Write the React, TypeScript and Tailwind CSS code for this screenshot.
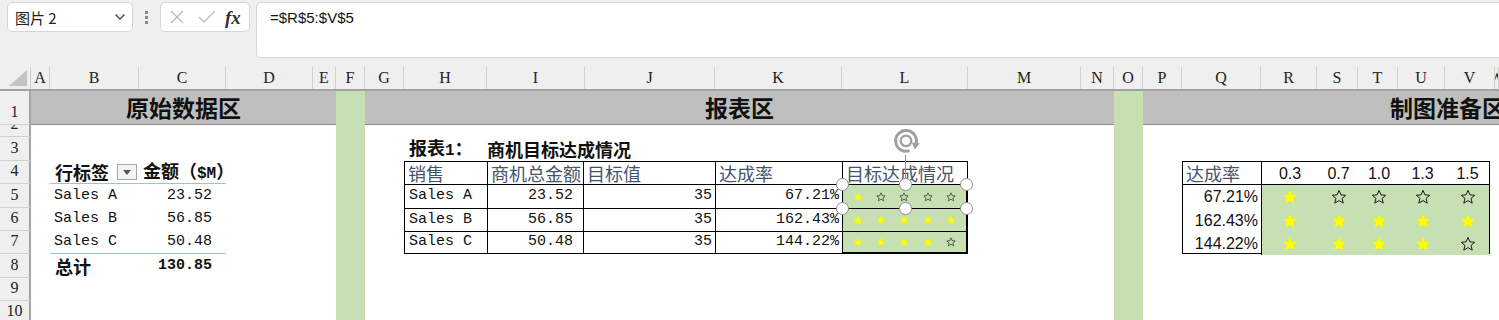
import React from "react";

// column widths of the sheet: row header, A..V, W (rest)
const COLS =
  "grid-cols-[31px_19px_89px_87px_87px_23px_29px_39px_83px_98px_130px_127px_126px_113px_33px_29px_39px_79px_56px_41px_40px_47px_50px_1fr]";

const cjk = "font-['Noto_Sans_CJK_SC',sans-serif]";
const mono = "font-['Liberation_Mono','Noto_Sans_CJK_SC',monospace]";
const arial = "font-['Liberation_Sans','Noto_Sans_CJK_SC',sans-serif]";
const serif = "font-['Liberation_Serif','Noto_Sans_CJK_SC',serif]";

const letters = "ABCDEFGHIJKLMNOPQRSTUVW".split("");

const rowLabels = [
  { label: "1", cls: "row-start-1" },
  { label: "2", cls: "row-start-2" },
  { label: "3", cls: "row-start-3" },
  { label: "4", cls: "row-start-4" },
  { label: "5", cls: "row-start-5" },
  { label: "6", cls: "row-start-6" },
  { label: "7", cls: "row-start-7" },
  { label: "8", cls: "row-start-8" },
  { label: "9", cls: "row-start-9" },
  { label: "10", cls: "row-start-10" },
];

const pivot = [
  { name: "Sales A", amount: "23.52" },
  { name: "Sales B", amount: "56.85" },
  { name: "Sales C", amount: "50.48" },
];

const report = [
  { name: "Sales A", amount: "23.52", target: "35", rate: "67.21%", stars: [1, 0, 0, 0, 0] },
  { name: "Sales B", amount: "56.85", target: "35", rate: "162.43%", stars: [1, 1, 1, 1, 1] },
  { name: "Sales C", amount: "50.48", target: "35", rate: "144.22%", stars: [1, 1, 1, 1, 0] },
];

const STAR = "12,2 14.9,8.8 22,9.4 16.6,14.1 18.3,21.2 12,17.4 5.7,21.2 7.4,14.1 2,9.4 9.1,8.8";

const Star = ({ filled, size }: { filled: boolean; size: number }) => (
  <svg width={size} height={size} viewBox="0 0 24 24">
    <polygon
      points={STAR}
      fill={filled ? "#ffff00" : "none"}
      stroke={filled ? "#f2f200" : "#1a1a1a"}
      strokeWidth={filled ? 0.8 : 1.5}
    />
  </svg>
);

const Handle = ({ cls }: { cls: string }) => (
  <div className={`absolute w-[13px] h-[13px] rounded-full bg-white border-[1.5px] border-[#8f8f8f] ${cls}`} />
);

const Toolbar = () => (
  <div className="h-[67px] flex items-start gap-0 pt-[2px] pl-[7px]">
    <div className="w-[126px] h-[30px] rounded-[5px] border border-[#d6d6d6] bg-white flex items-center pl-[7px] pr-[6px]">
      <span className={`${cjk} text-[15px] text-[#222] leading-none`}>图片 2</span>
      <svg className="ml-auto" width="12" height="8" viewBox="0 0 12 8">
        <polyline points="1.5,1.5 6,6 10.5,1.5" fill="none" stroke="#444" strokeWidth="1.3" />
      </svg>
    </div>
    <div className="w-[27px] h-[30px] flex flex-col items-center justify-center gap-[2px]">
      <div className="w-[3px] h-[3px] bg-[#8a8a8a]" />
      <div className="w-[3px] h-[3px] bg-[#8a8a8a]" />
      <div className="w-[3px] h-[3px] bg-[#8a8a8a]" />
    </div>
    <div className="w-[90px] h-[30px] rounded-[5px] border border-[#d6d6d6] bg-white flex items-center pl-[8px]">
      <svg width="16" height="16" viewBox="0 0 16 16">
        <path d="M2 2 L14 14 M14 2 L2 14" stroke="#b8b8b8" strokeWidth="1.2" fill="none" />
      </svg>
      <svg className="ml-[13px]" width="18" height="16" viewBox="0 0 18 16">
        <polyline points="1,8 6,13 17,2" stroke="#b8b8b8" strokeWidth="1.2" fill="none" />
      </svg>
      <span className={`ml-[9px] ${serif} italic font-bold text-[19px] leading-none text-[#333]`}>fx</span>
    </div>
    <div className="ml-[6px] flex-1 h-[56px] rounded-l-[5px] border border-r-0 border-[#d6d6d6] bg-white pl-[13px] pt-[7px]">
      <div className={`${arial} text-[15px] leading-none text-[#111]`}>=$R$5:$V$5</div>
    </div>
  </div>
);

const ColumnHeader = () => (
  <div className={`grid ${COLS} h-[24px] border-b-2 border-[#a3a3a3]`}>
    <div className="relative border-r border-[#d0d0d0]">
      <svg className="absolute right-[3px] bottom-[3px]" width="18" height="16" viewBox="0 0 18 16">
        <polygon points="18,0 18,16 0,16" fill="#c4c4c4" />
      </svg>
    </div>
    {letters.map((l) => (
      <div
        key={l}
        className={`${serif} text-[16px] text-[#222] flex items-center justify-center border-r border-[#d0d0d0] overflow-hidden whitespace-nowrap`}
      >
        {l}
      </div>
    ))}
  </div>
);

const PivotTable = () => (
  <div className={`col-start-3 col-span-2 row-start-4 row-span-5 grid grid-cols-[89px_87px] grid-rows-[23px_24px_23px_23px_24px] ${mono} text-[15px] text-[#111]`}>
    <div className="flex items-center pl-[5px] pr-[2px] border-b border-[#9bc2e6]">
      <span className={`${cjk} font-bold text-[18px] leading-none`}>行标签</span>
      <div className="ml-auto w-[20px] h-[16px] border border-[#a6a6a6] bg-[#f4f4f4] flex items-center justify-center">
        <svg width="8" height="5" viewBox="0 0 8 5">
          <polygon points="0,0 8,0 4,5" fill="#555" />
        </svg>
      </div>
    </div>
    <div className="flex items-center pl-[4px] border-b border-[#9bc2e6] whitespace-nowrap">
      <span className={`${cjk} font-bold text-[18px] leading-[23px]`}>
        金额（<span className={`${mono} text-[16px]`}>$M</span>）
      </span>
    </div>
    {pivot.map((r, i) => (
      <React.Fragment key={r.name}>
        <div className={`flex items-center pl-[4px] whitespace-pre ${i === 2 ? "border-b border-[#9bc2e6]" : ""}`}>{r.name}</div>
        <div className={`flex items-center justify-end pr-[14px] ${i === 2 ? "border-b border-[#9bc2e6]" : ""}`}>{r.amount}</div>
      </React.Fragment>
    ))}
    <div className="flex items-center pl-[5px]">
      <span className={`${cjk} font-bold text-[18px] leading-none`}>总计</span>
    </div>
    <div className="flex items-center justify-end pr-[14px] font-bold">130.85</div>
  </div>
);

const ReportTable = () => (
  <>
    <div className="col-start-9 row-start-3 flex items-center pl-[5px] whitespace-nowrap">
      <span className={`${cjk} font-bold text-[18px] leading-[24px]`}>
        报表<span className={`${mono} text-[16px]`}>1</span>：
      </span>
    </div>
    <div className="col-start-10 col-span-3 row-start-3 flex items-center whitespace-nowrap">
      <span className={`${cjk} font-bold text-[18px] leading-none`}>商机目标达成情况</span>
    </div>
    <div className={`col-start-9 col-span-5 row-start-4 row-span-4 grid grid-cols-[83px_96px_132px_127px_126px] grid-rows-[23px_24px_23px_23px] ${mono} text-[15px] text-[#111]`}>
      {["销售", "商机总金额", "目标值", "达成率", "目标达成情况"].map((h, i) => (
        <div
          key={h}
          className={`flex items-center pl-[3px] border-l border-t border-black whitespace-nowrap ${cjk} text-[18px] leading-none text-[#44546a] ${i === 4 ? "border-r" : ""}`}
        >
          {h}
        </div>
      ))}
      {report.map((r, ri) => (
        <React.Fragment key={r.name}>
          <div className={`flex items-center pl-[4px] whitespace-pre border-l border-t border-black ${ri === 2 ? "border-b" : ""}`}>{r.name}</div>
          <div className={`flex items-center justify-end pr-[10px] border-l border-t border-black ${ri === 2 ? "border-b" : ""}`}>{r.amount}</div>
          <div className={`flex items-center justify-end pr-[3px] border-l border-t border-black ${ri === 2 ? "border-b" : ""}`}>{r.target}</div>
          <div className={`flex items-center justify-end pr-[3px] border-l border-t border-black ${ri === 2 ? "border-b" : ""}`}>{r.rate}</div>
          <div
            className={`relative bg-[#c6e0b4] grid grid-cols-5 items-center justify-items-center px-[3px] border-l border-t border-r-2 border-black ${ri === 2 ? "border-b-2" : ""} ${ri === 0 ? "z-10" : ""}`}
          >
            {r.stars.map((s, si) => (
              <Star key={si} filled={s === 1} size={10} />
            ))}
            {ri === 0 && (
              <>
                <div className="absolute left-[62px] -top-[30px] h-[30px] w-px bg-[#8f8f8f]" />
                <svg className="absolute left-[48px] -top-[58px]" width="30" height="30" viewBox="0 0 26 26">
                  <path d="M 16.1 20.5 A 9 9 0 1 1 21.5 15.1" fill="none" stroke="#a0a0a0" strokeWidth="2.6" />
                  <polygon points="18,13.4 25,14 20.6,19.6" fill="#a0a0a0" />
                  <circle cx="13" cy="12" r="4.6" fill="none" stroke="#a0a0a0" strokeWidth="2" />
                </svg>
                <Handle cls="-left-[7px] -top-[7px]" />
                <Handle cls="left-[56px] -top-[7px]" />
                <Handle cls="-right-[7px] -top-[7px]" />
                <Handle cls="-left-[7px] -bottom-[7px]" />
                <Handle cls="left-[56px] -bottom-[7px]" />
                <Handle cls="-right-[7px] -bottom-[7px]" />
              </>
            )}
          </div>
        </React.Fragment>
      ))}
    </div>
  </>
);

const ChartPrep = () => (
  <div className={`col-start-18 col-span-6 row-start-4 row-span-4 mr-[5px] grid grid-cols-[79px_1fr] grid-rows-[23px_24px_23px_23px] border border-black ${arial} text-[16px] text-[#111]`}>
    <div className={`flex items-center pl-[3px] border-r border-b border-black ${cjk} text-[18px] leading-none text-[#44546a]`}>达成率</div>
    <div className="grid grid-cols-[56px_41px_40px_47px_1fr] items-center justify-items-center border-b border-black">
      {["0.3", "0.7", "1.0", "1.3", "1.5"].map((v) => (
        <span key={v}>{v}</span>
      ))}
    </div>
    {report.map((r) => (
      <React.Fragment key={r.rate}>
        <div className="flex items-center justify-end pr-[3px] border-r border-black">{r.rate}</div>
        <div className="bg-[#c6e0b4] grid grid-cols-[56px_41px_40px_47px_1fr] items-center justify-items-center">
          {r.stars.map((s, si) => (
            <Star key={si} filled={s === 1} size={16} />
          ))}
        </div>
      </React.Fragment>
    ))}
  </div>
);

const Sheet = () => (
  <div className={`grid ${COLS} grid-rows-[34px_12px_24px_23px_24px_23px_23px_24px_23px_23px] bg-white text-[#111]`}>
    {rowLabels.map((r) => (
      <div
        key={r.label}
        className={`col-start-1 ${r.cls} bg-[#efefef] border-r-2 border-b border-r-[#a3a3a3] border-b-[#d0d0d0] flex items-end justify-center pb-[4px] overflow-hidden ${serif} text-[16px] leading-none text-[#222]`}
      >
        {r.label}
      </div>
    ))}

    <div className={`col-start-2 col-span-5 row-start-1 bg-[#bfbfbf] border-b border-[#8c8c8c] flex items-center justify-center ${cjk} font-bold text-[23px] leading-none text-[#111]`}>
      原始数据区
    </div>
    <div className="col-start-7 row-start-1 row-span-10 bg-[#c6e0b4]" />
    <div className={`col-start-8 col-span-8 row-start-1 bg-[#bfbfbf] border-b border-[#8c8c8c] flex items-center justify-center ${cjk} font-bold text-[23px] leading-none text-[#111]`}>
      报表区
    </div>
    <div className="col-start-16 row-start-1 row-span-10 bg-[#c6e0b4]" />
    <div className={`col-start-17 col-span-8 row-start-1 bg-[#bfbfbf] border-b border-[#8c8c8c] flex items-center pl-[247px] overflow-hidden whitespace-nowrap ${cjk} font-bold text-[23px] leading-none text-[#111]`}>
      制图准备区
    </div>

    <PivotTable />
    <ReportTable />
    <ChartPrep />
  </div>
);

export default function App() {
  return (
    <div className="w-[1499px] h-[320px] overflow-hidden bg-[#efefef]">
      <Toolbar />
      <ColumnHeader />
      <Sheet />
    </div>
  );
}
